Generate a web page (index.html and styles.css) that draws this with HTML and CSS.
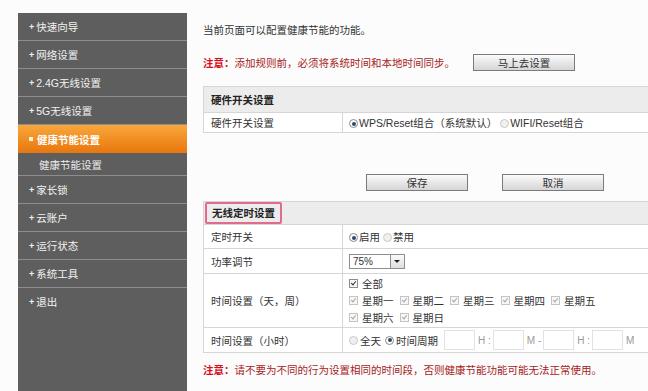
FILE: index.html
```html
<!DOCTYPE html>
<html lang="zh-CN">
<head>
    <meta charset="UTF-8">
    <title>健康节能设置</title>
    <link rel="stylesheet" href="styles.css">
</head>
<body>
    <div class="page">
        <nav class="sidebar">
            <a class="nav-item">快速向导</a>
            <a class="nav-item">网络设置</a>
            <a class="nav-item">2.4G无线设置</a>
            <a class="nav-item">5G无线设置</a>
            <a class="nav-item active">健康节能设置</a>
            <a class="nav-sub">健康节能设置</a>
            <a class="nav-item">家长锁</a>
            <a class="nav-item">云账户</a>
            <a class="nav-item">运行状态</a>
            <a class="nav-item">系统工具</a>
            <a class="nav-item last">退出</a>
        </nav>

        <main class="content">
            <p class="intro">当前页面可以配置健康节能的功能。</p>
            <div class="notice">
                <span class="warn"><b>注意：</b>添加规则前，必须将系统时间和本地时间同步。</span>
                <button class="btn btn-sync">马上去设置</button>
            </div>

            <!-- hardware switch -->
            <table class="form-table hw">
                <tr class="head"><td colspan="2">硬件开关设置</td></tr>
                <tr class="row-hw">
                    <td class="label">硬件开关设置</td>
                    <td class="value">
                        <span class="radio on"></span>WPS/Reset组合（系统默认）
                        <span class="radio"></span>WIFI/Reset组合
                    </td>
                </tr>
            </table>

            <div class="actions">
                <button class="btn">保存</button>
                <button class="btn">取消</button>
            </div>

            <!-- wireless timer -->
            <table class="form-table timer">
                <tr class="head"><td colspan="2"><span class="highlight">无线定时设置</span></td></tr>
                <tr class="row-switch">
                    <td class="label">定时开关</td>
                    <td class="value"><span class="radio on"></span>启用 <span class="radio"></span>禁用</td>
                </tr>
                <tr class="row-power">
                    <td class="label">功率调节</td>
                    <td class="value">
                        <div class="select"><span class="select-val">75%</span><span class="select-arrow"></span></div>
                    </td>
                </tr>
                <tr class="row-days">
                    <td class="label">时间设置（天，周）</td>
                    <td class="value">
                        <div class="days">
                            <span class="day"><span class="check strong"></span>全部</span>
                        </div>
                        <div class="days">
                            <span class="day"><span class="check"></span>星期一</span>
                            <span class="day"><span class="check"></span>星期二</span>
                            <span class="day"><span class="check"></span>星期三</span>
                            <span class="day"><span class="check"></span>星期四</span>
                            <span class="day"><span class="check"></span>星期五</span>
                        </div>
                        <div class="days">
                            <span class="day"><span class="check"></span>星期六</span>
                            <span class="day"><span class="check"></span>星期日</span>
                        </div>
                    </td>
                </tr>
                <tr class="row-hours">
                    <td class="label">时间设置（小时）</td>
                    <td class="value">
                        <div class="hours">
                            <span class="radio"></span>全天
                            <span class="radio on"></span>时间周期
                            <input class="time-box first" type="text">
                            <span class="unit">H :</span>
                            <input class="time-box" type="text">
                            <span class="unit">M -</span>
                            <input class="time-box" type="text">
                            <span class="unit">H :</span>
                            <input class="time-box" type="text">
                            <span class="unit">M</span>
                        </div>
                    </td>
                </tr>
            </table>

            <p class="warn bottom"><b>注意：</b>请不要为不同的行为设置相同的时间段，否则健康节能功能可能无法正常使用。</p>
        </main>
    </div>
</body>
</html>
```

FILE: styles.css
```css
html, body {
    margin: 0;
    padding: 0;
    height: 100%;
    overflow: hidden;
    background: #fcfcfc;
    font-family: "Liberation Sans", "Noto Sans CJK SC", sans-serif;
    font-size: 10.5px;
    color: #333;
}
.page {
    display: flex;
    height: 100%;
    box-sizing: border-box;
    padding-top: 13px;
}

/* sidebar */
.sidebar {
    width: 169px;
    margin-left: 18px;
    flex-shrink: 0;
    background: #5e5e5e;
    display: flex;
    flex-direction: column;
}
.nav-item {
    display: flex;
    align-items: center;
    height: 27px;
    padding-left: 11px;
    border-bottom: 1px solid #8d8d8d;
    color: #f2f2f2;
}
.nav-item::before {
    content: "+";
    font-size: 9px;
    font-weight: bold;
    margin-right: 2px;
}
.nav-item.last {
    border-bottom: none;
}
.nav-item.active {
    height: 28px;
    border-bottom: none;
    background: linear-gradient(to bottom, #f9a73c, #ef8a1f 60%, #e8760f);
    color: #fff;
    font-weight: bold;
}
.nav-item.active::before {
    content: "";
    width: 4px;
    height: 4px;
    background: #fff3d8;
    margin-right: 4px;
}
.nav-sub {
    display: flex;
    align-items: center;
    height: 22px;
    padding-left: 21px;
    border-bottom: 1px solid #8d8d8d;
    color: #ececec;
}

/* content */
.content {
    width: 470px;
    flex-shrink: 0;
    margin-left: 16px;
}
.intro {
    margin: 7px 0 0;
    line-height: 20px;
}
.notice {
    display: flex;
    align-items: center;
    height: 20px;
    margin-top: 12px;
}
.warn {
    color: #a61b22;
}
.warn b {
    color: #d4101e;
}
.btn {
    height: 17px;
    width: 102px;
    padding: 0;
    border: 1px solid #7b7b7b;
    background: linear-gradient(to bottom, #fbfbfb, #e4e4e4 60%, #d6d6d6);
    font-family: inherit;
    font-size: 10.5px;
    color: #333;
}
.btn-sync {
    margin-left: 18px;
}

/* tables */
.form-table {
    width: 100%;
    border-collapse: collapse;
    border: 1px solid #d6d6d6;
}
.form-table td {
    padding: 0;
    border-bottom: 1px solid #d6d6d6;
}
.form-table .head td {
    background: #ececec;
    font-weight: bold;
    padding-left: 7px;
    color: #222;
}
.form-table .label {
    width: 131px;
    padding-left: 7px;
    border-right: 1px solid #d6d6d6;
    background: #fff;
}
.form-table .value {
    padding-left: 6px;
    background: #fff;
}
.hw {
    margin-top: 14px;
}
.hw .head td {
    height: 25px;
}
.row-hw td {
    height: 19px;
}

.actions {
    display: flex;
    gap: 34px;
    padding-left: 163px;
    margin-top: 41px;
}

.timer {
    margin-top: 10px;
}
.timer .head td {
    height: 22px;
    padding-left: 1px;
}
.highlight {
    display: inline-block;
    padding: 1px 5px 2px;
    border: 2px solid #e46a8b;
    border-radius: 2px;
}
.row-switch td {
    height: 23px;
}
.row-power td {
    height: 24px;
}
.row-days td {
    height: 53px;
}
.row-hours td {
    height: 24px;
}

/* controls */
.radio {
    display: inline-block;
    box-sizing: border-box;
    width: 9px;
    height: 9px;
    border-radius: 50%;
    border: 1px solid #c9c9c9;
    background: #f0f0f0;
    vertical-align: -1px;
    margin-right: 1px;
    position: relative;
}
.radio.on {
    border-color: #8a8a8a;
    background: #fff;
}
.radio.on::after {
    content: "";
    position: absolute;
    left: 1.5px;
    top: 1.5px;
    width: 4px;
    height: 4px;
    border-radius: 50%;
    background: #2c4a6e;
}

.select {
    display: flex;
    width: 56px;
    height: 15px;
    box-sizing: border-box;
    border: 1px solid #8e8e8e;
    background: #fff;
}
.select-val {
    flex: 1;
    padding-left: 3px;
    line-height: 14px;
    font-size: 10px;
}
.select-arrow {
    width: 13px;
    border-left: 1px solid #8e8e8e;
    background: linear-gradient(to bottom, #fafafa, #dedede);
    position: relative;
}
.select-arrow::after {
    content: "";
    position: absolute;
    left: 3px;
    top: 5px;
    border-left: 3px solid transparent;
    border-right: 3px solid transparent;
    border-top: 3px solid #222;
}

.days {
    display: flex;
    height: 17px;
    align-items: center;
}
.day {
    display: flex;
    align-items: center;
    margin-right: 6px;
}
.check {
    width: 9px;
    height: 9px;
    box-sizing: border-box;
    border: 1px solid #c4c4c4;
    background: #f6f6f6;
    margin-right: 4px;
    position: relative;
}
.check::after {
    content: "";
    position: absolute;
    left: 2px;
    top: 0;
    width: 2px;
    height: 4px;
    border-right: 1px solid #a8a8a8;
    border-bottom: 1px solid #a8a8a8;
    transform: rotate(40deg);
}
.check.strong {
    border-color: #8d8d8d;
}
.check.strong::after {
    border-color: #333;
}

.hours {
    display: flex;
    align-items: center;
    height: 24px;
    white-space: nowrap;
}
.hours .radio {
    margin-right: 2px;
}
.hours .radio.on {
    margin-left: 4px;
}
.time-box {
    width: 31px;
    height: 20px;
    box-sizing: border-box;
    border: 1px solid #e2e2e2;
    background: #fff;
    margin: 0 3px 0 2px;
    padding: 0;
}
.time-box.first {
    margin-left: 6px;
}
.unit {
    color: #9a9a9a;
    min-width: 10px;
    font-size: 10px;
    white-space: nowrap;
}

.bottom {
    margin: 7px 0 0;
    line-height: 20px;
}
```
